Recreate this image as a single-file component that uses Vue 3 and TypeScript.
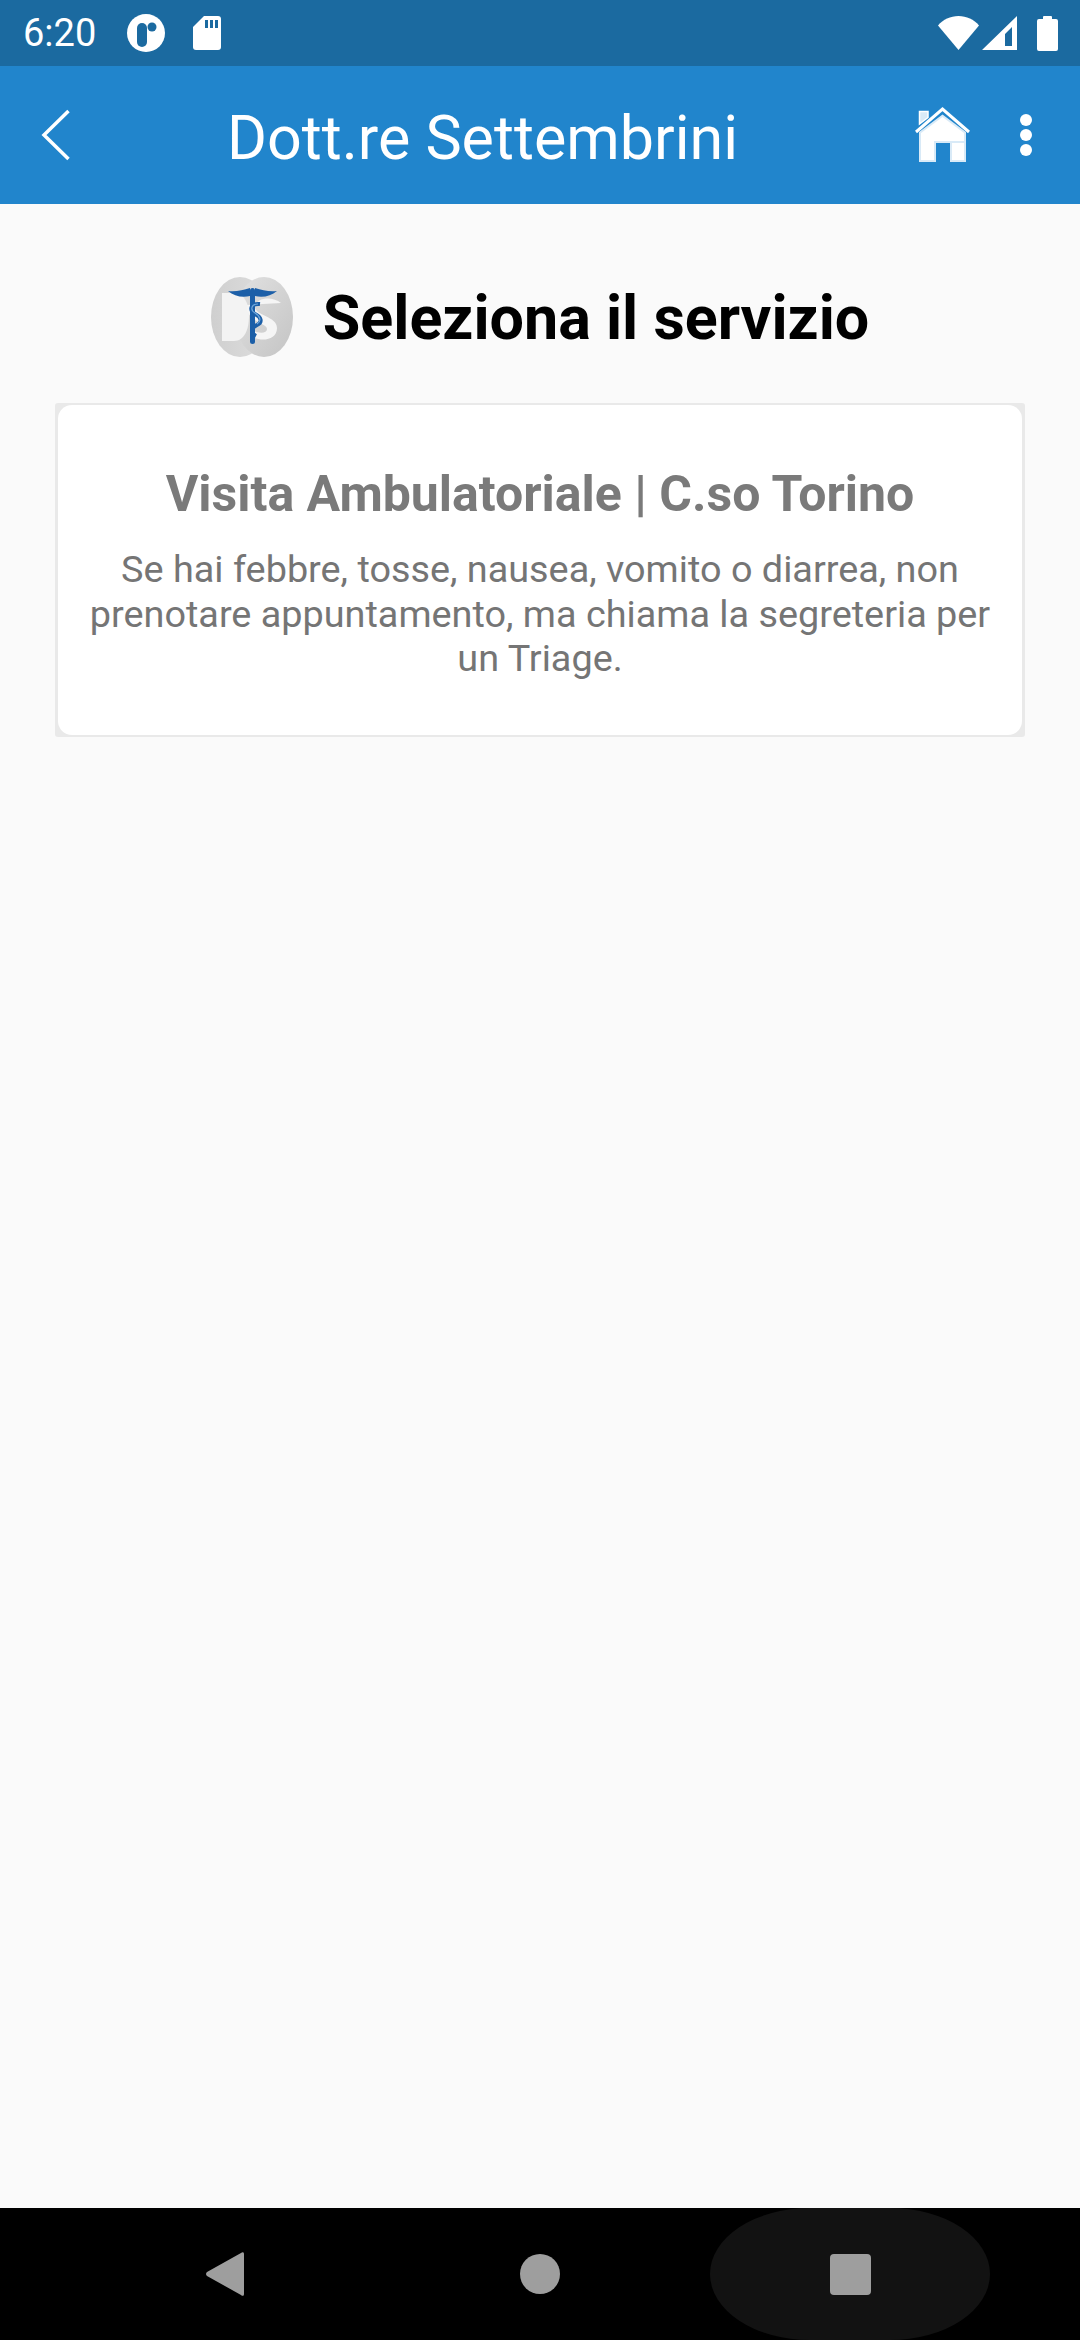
<template>
  <div class="screen">
    <div class="status-bar">
      <span class="time">6:20</span>
      <svg class="ic-app" width="38" height="38" viewBox="0 0 38 38">
        <circle cx="19" cy="19" r="19" fill="#fff" />
        <rect x="10" y="9" width="10" height="24" rx="5" fill="#1b6aa0" />
        <circle cx="25" cy="13" r="4.500" fill="#1b6aa0" />
      </svg>
      <svg class="ic-sd" width="28" height="34" viewBox="0 0 28 34">
        <path d="M11 0h14a3 3 0 0 1 3 3v28a3 3 0 0 1-3 3H3a3 3 0 0 1-3-3V11z" fill="#fff" />
        <path d="M12 4h3v8h-3zM17 4h3v8h-3zM22 4h3v8h-3z" fill="#1b6aa0" />
      </svg>
      <div class="spacer"></div>
      <svg width="41" height="34" viewBox="0 0 41 34">
        <path d="M0 9.500C5 3.500 12.500 0 20.500 0S36 3.500 41 9.500L20.500 34z" fill="#fff" />
      </svg>
      <svg class="ic-signal" width="35" height="34" viewBox="0 0 35 34">
        <path d="M35 0v34H0zM23 30h7V11l-7 7z" fill="#fff" fill-rule="evenodd" />
      </svg>
      <svg class="ic-battery" width="21" height="36" viewBox="0 0 21 36">
        <path d="M6 2a1 1 0 0 1 1-1h7a1 1 0 0 1 1 1v2h4a2 2 0 0 1 2 2v28a2 2 0 0 1-2 2H2a2 2 0 0 1-2-2V6a2 2 0 0 1 2-2h4z" fill="#fff" />
      </svg>
    </div>

    <div class="app-bar">
      <svg class="back" width="30" height="52" viewBox="0 0 30 52">
        <path d="M27.500 2L3 26l24.500 24" fill="none" stroke="#fff" stroke-width="3.500" />
      </svg>
      <span class="app-title">Dott.re Settembrini</span>
      <div class="spacer"></div>
      <svg class="home" width="56" height="56" viewBox="0 0 56 56">
        <path d="M4.500 17V4.500h8.500v6z" fill="#d9eaf7" stroke="#fff" stroke-width="1.500" />
        <path d="M1 25L27.500 2 54 25" fill="none" stroke="#fff" stroke-width="3" />
        <path d="M4 55V25L27.500 7.500 51 25v30H35V36H21v19z" fill="#d9eaf7" />
        <path d="M6 53V26L27.500 10 49 26v8H19v19z" fill="#fff" />
        <path d="M37 36h12v17H37z" fill="#fff" />
      </svg>
      <div class="dots"><i></i><i></i><i></i></div>
    </div>

    <main class="content">
      <div class="heading">
        <svg class="logo" width="82" height="80" viewBox="0 0 82 80">
          <defs>
            <linearGradient id="lobe-l" x1="0" y1="0" x2="1" y2="0">
              <stop offset="0" stop-color="#cfcfcf" />
              <stop offset="1" stop-color="#dedede" />
            </linearGradient>
            <linearGradient id="lobe-r" x1="0" y1="0" x2="1" y2="1">
              <stop offset="0" stop-color="#e2e2e2" />
              <stop offset="1" stop-color="#c4c4c4" />
            </linearGradient>
          </defs>
          <ellipse cx="29" cy="40" rx="29" ry="40" fill="url(#lobe-l)" />
          <ellipse cx="53" cy="40" rx="29" ry="40" fill="url(#lobe-r)" />
          <path d="M11 16h12c10 0 15 10 15 23 0 14-5 25-15 25H11z" fill="#f3f3f3" />
          <path d="M70 26c-8-7-24-6-26 3-1 10 22 10 22 22 0 12-15 14-24 9v-6c8 3 14 2 14-2 0-6-22-8-20-24" fill="#f5f5f5" />
          <path d="M17 14c8 1 15-1 22-3v8c-8 2-16 0-22-5z" fill="#1c5fa8" />
          <path d="M66 14c-8 1-15-1-22-3v8c8 2 16 0 22-5z" fill="#1c5fa8" />
          <rect x="39" y="11" width="5" height="56" rx="2.500" fill="#1c5fa8" />
          <path d="M49 27c-10-1-11 7-5 10s8 8 2 11-7 8-1 11" fill="none" stroke="#1c5fa8" stroke-width="4" />
          <path d="M47 27c-7 0-8 6-3 9s7 8 2 11" fill="none" stroke="#6fa8dc" stroke-width="1.200" />
        </svg>
        <h1 class="heading-text">Seleziona il servizio</h1>
      </div>

      <div class="card">
        <div class="card-inner">
          <h2 class="card-title">Visita Ambulatoriale | C.so Torino</h2>
          <p class="card-text">Se hai febbre, tosse, nausea, vomito o diarrea, non prenotare appuntamento, ma chiama la segreteria per un Triage.</p>
        </div>
      </div>
    </main>

    <div class="nav-bar">
      <div class="ripple"></div>
      <svg width="38" height="44" viewBox="0 0 38 44" class="nav-back">
        <path d="M38 2v40c0 2-1.500 2.500-3 1L1 24c-1.300-1-1.300-3 0-4L35 1c1.500-1.500 3-1 3 1z" fill="#9e9e9e" />
      </svg>
      <div class="nav-home"></div>
      <div class="nav-recent"></div>
    </div>
  </div>
</template>

<script setup lang="ts">
</script>

<style>
html, body {
  margin: 0;
  background: #fafafa;
}
</style>

<style scoped>
.screen {
  width: 1080px;
  height: 2340px;
  display: flex;
  flex-direction: column;
  background: #fafafa;
  font-family: Roboto, "Liberation Sans", sans-serif;
  overflow: hidden;
}

.spacer {
  flex: 1;
}

.status-bar {
  height: 66px;
  flex: none;
  display: flex;
  align-items: center;
  padding: 0 22px 0 23px;
  box-sizing: border-box;
  background: #1b6aa0;
  color: #fff;
}

.time {
  font-size: 38px;
  line-height: 66px;
  width: 104px;
}

.ic-sd {
  margin-left: 28px;
}

.ic-signal {
  margin-left: 3px;
}

.ic-battery {
  margin-left: 20px;
}

.app-bar {
  height: 138px;
  flex: none;
  display: flex;
  align-items: center;
  padding: 0 48px 0 41px;
  box-sizing: border-box;
  background: #2185cc;
  color: #fff;
}

.app-title {
  font-size: 61px;
  margin-left: 156px;
  padding-top: 5px;
  white-space: nowrap;
}

.dots {
  display: flex;
  flex-direction: column;
  gap: 3px;
  margin-left: 49px;
}

.dots i {
  display: block;
  width: 12px;
  height: 12px;
  border-radius: 50%;
  background: #fff;
}

.content {
  flex: 1;
  padding: 73px 55px 0;
}

.heading {
  display: flex;
  align-items: center;
  justify-content: center;
  gap: 30px;
  height: 80px;
}

.heading-text {
  margin: 0;
  padding-top: 2px;
  font-size: 61px;
  font-weight: 700;
  color: #000;
}

.card {
  margin-top: 46px;
  height: 334px;
  box-sizing: border-box;
  padding: 2px 3px;
  background: #e9e9e9;
  border-radius: 3px;
}

.card-inner {
  height: 100%;
  box-sizing: border-box;
  padding: 61px 0 0;
  background: #fff;
  border-radius: 14px;
  text-align: center;
}

.card-title {
  margin: 0;
  font-size: 50px;
  font-weight: 700;
  line-height: 56px;
  color: #7a7a7a;
}

.card-text {
  margin: 25px 24px 0;
  font-size: 37.800px;
  line-height: 44.500px;
  color: #757575;
}

.nav-bar {
  position: relative;
  height: 132px;
  flex: none;
  background: #000;
  overflow: hidden;
}

.ripple {
  position: absolute;
  left: 710px;
  top: 0;
  width: 280px;
  height: 132px;
  border-radius: 100px / 66px;
  background: #121212;
}

.nav-back {
  position: absolute;
  left: 206px;
  top: 44px;
}

.nav-home {
  position: absolute;
  left: 520px;
  top: 46px;
  width: 40px;
  height: 40px;
  border-radius: 50%;
  background: #9e9e9e;
}

.nav-recent {
  position: absolute;
  left: 830px;
  top: 46px;
  width: 41px;
  height: 41px;
  border-radius: 4px;
  background: #9e9e9e;
}
</style>
